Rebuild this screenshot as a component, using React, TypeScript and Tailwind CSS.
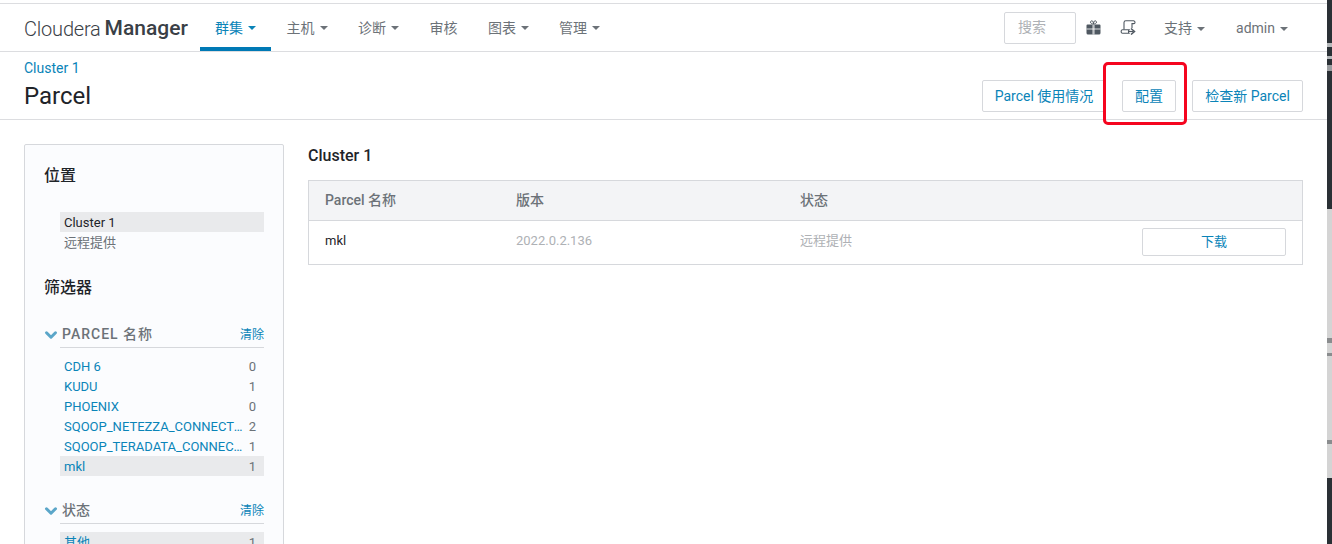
import { ChevronDown } from "lucide-react";

const FONT = "font-['Roboto','Noto_Sans_CJK_SC',sans-serif]";

const NAV = [
  { label: "群集", caret: true, active: true, w: "w-[71px]" },
  { label: "主机", caret: true, w: "w-[72px]" },
  { label: "诊断", caret: true, w: "w-[71px]" },
  { label: "审核", w: "w-[59px]" },
  { label: "图表", caret: true, w: "w-[71px]" },
  { label: "管理", caret: true, w: "w-[71px]" },
];

const PARCELS = [
  { name: "CDH 6", count: 0 },
  { name: "KUDU", count: 1 },
  { name: "PHOENIX", count: 0 },
  { name: "SQOOP_NETEZZA_CONNECTOR", count: 2 },
  { name: "SQOOP_TERADATA_CONNECTOR", count: 1 },
  { name: "mkl", count: 1, selected: true },
];

function Caret() {
  return <span className="ml-[5px] inline-block size-0 border-x-[4px] border-t-[4px] border-x-transparent border-t-current align-middle" />;
}

function OutlineButton({ children, className = "" }: { children: React.ReactNode; className?: string }) {
  return (
    <button type="button" className={`rounded-[2px] border border-[#d6d8dc] bg-white text-[#0a84b8] ${className}`}>
      {children}
    </button>
  );
}

function FilterHeading({ children }: { children: React.ReactNode }) {
  return (
    <div className="flex items-center">
      <ChevronDown className="size-[18px] shrink-0 -ml-[2px] mr-[2px] mt-[2px] text-[#5ba6c9]" strokeWidth={4} />
      <div className="flex h-[27px] flex-1 items-center justify-between pt-[2px]">
        {children}
      </div>
    </div>
  );
}

export default function App() {
  return (
    <div className={`${FONT} relative h-[544px] w-[1332px] overflow-hidden bg-white pt-[3px] text-[14px] text-[#1f2429]`}>
      <header className="flex h-[49px] items-stretch border-y border-[#dcdde0] pl-[24px] pr-[44px]">
        <div className="flex w-[176px] items-center pt-[2px] leading-none text-[#3a4046]">
          <span className="text-[20px] font-light tracking-[-0.2px]">Cloudera</span>
          <span className="ml-[4px] text-[21px] font-medium">Manager</span>
        </div>
        <nav className="flex">
          {NAV.map((item) => (
            <a
              key={item.label}
              className={`flex items-center justify-center border-b-[4px] pt-[5px] ${item.w} ${
                item.active ? "border-[#0079b5] text-[#0a84b8]" : "border-transparent text-[#6c7278]"
              }`}
            >
              {item.label}
              {item.caret && <Caret />}
            </a>
          ))}
        </nav>
        <div className="ml-auto flex items-center text-[#6c7278]">
          <div className="flex h-[32px] w-[72px] items-center rounded-[2px] border border-[#d6d8dc] pl-[13px] text-[14px] text-[#aeb1b5]">搜索</div>
          <svg viewBox="0 0 15 15" className="ml-[10px] size-[15px] text-[#4f5861]" fill="currentColor">
            <path d="M.5 5.500a1 1 0 0 1 1-1h12a1 1 0 0 1 1 1V13a1.500 1.500 0 0 1-1.500 1.500H2A1.500 1.500 0 0 1 .5 13z" />
            <path d="M7 4.500v10M8 4.500v10M.5 9h14" stroke="#fff" strokeWidth="0.8" />
            <path d="M7.500 4C6 4 4.500 3.500 4.500 2.200S6 .4 6.700 1.200 7.500 4 7.500 4zm0 0c1.500 0 3-.5 3-1.800S9 .4 8.300 1.200 7.500 4 7.500 4z" fill="none" stroke="currentColor" strokeWidth="1" />
          </svg>
          <svg viewBox="0 0 16 15" className="ml-[19px] h-[15px] w-[16px] text-[#4f5861]" fill="none" stroke="currentColor" strokeWidth="1.100">
            <path d="M4 9.500V2.500A1.800 1.800 0 0 1 5.800.8H13.500a1.500 1.500 0 0 1 1.500 1.600c0 .7-.5 1.200-1.200 1.200H12V8" />
            <path d="M2.500 9.800h6.500c-.7.800-.7 2.700 0 3.500H2.500c-1.800 0-1.800-3.500 0-3.500z" />
            <path d="M11 8.500l3.500 3-3.500 3" strokeWidth="1.500" />
            <path d="M8.500 11.500h5" strokeWidth="1.200" />
          </svg>
          <span className="ml-[28px] pt-[1px]">支持<Caret /></span>
          <span className="ml-[31px] pt-[1px]">admin<Caret /></span>
        </div>
      </header>

      <section className="flex h-[68px] items-start justify-between border-b border-[#dcdde0] pl-[24px] pr-[29px]">
        <div>
          <a className="mt-[8px] block text-[14px] leading-[16px] text-[#0a84b8]">Cluster 1</a>
          <h1 className="mt-[5px] text-[24px] leading-[30px] text-[#1f2429]">Parcel</h1>
        </div>
        <div className="mt-[28px] flex gap-[16px] text-[14px]">
          <OutlineButton className="h-[32px] w-[124px]">Parcel 使用情况</OutlineButton>
          <OutlineButton className="h-[32px] w-[54px]">配置</OutlineButton>
          <OutlineButton className="h-[32px] w-[111px]">检查新 Parcel</OutlineButton>
        </div>
      </section>

      <main className="flex gap-[24px] pl-[24px] pr-[29px] pt-[24px]">
        <aside className="h-[420px] w-[260px] shrink-0 rounded-[2px] border border-[#d6d8dc] bg-[#fbfcfe] pl-[19px] pr-[19px] pt-[19px]">
          <h3 className="text-[16px] font-medium leading-[24px]">位置</h3>
          <ul className="mt-[24px] ml-[16px] text-[13px] leading-[22px]">
            <li className="h-[20px] bg-[#e9eaec] pl-[4px]">Cluster 1</li>
            <li className="h-[20px] pl-[4px] text-[#6c7278]">远程提供</li>
          </ul>
          <h3 className="mt-[24px] text-[16px] font-medium leading-[24px]">筛选器</h3>

          <div className="mt-[20px]">
            <FilterHeading>
              <span className="text-[14px] font-medium tracking-[1px] text-[#6c7278]">PARCEL 名称</span>
              <a className="text-[12px] text-[#0a84b8]">清除</a>
            </FilterHeading>
            <ul className="ml-[16px] border-t border-[#d6d8dc] pt-[8px] text-[13px] leading-[22px] text-[#0a84b8]">
              {PARCELS.map((p) => (
                <li key={p.name} className={`flex h-[20px] justify-between pl-[4px] pr-[8px] ${p.selected ? "bg-[#e9eaec]" : ""}`}>
                  <span className="w-[180px] truncate">{p.name}</span>
                  <span className="text-[#6c7278]">{p.count}</span>
                </li>
              ))}
            </ul>
          </div>

          <div className="mt-[20px]">
            <FilterHeading>
              <span className="text-[14px] font-medium text-[#6c7278]">状态</span>
              <a className="text-[12px] text-[#0a84b8]">清除</a>
            </FilterHeading>
            <ul className="ml-[16px] border-t border-[#d6d8dc] pt-[8px] text-[13px] leading-[22px] text-[#0a84b8]">
              <li className="flex h-[20px] justify-between bg-[#e9eaec] pl-[4px] pr-[8px]">
                <span>其他</span>
                <span className="text-[#6c7278]">1</span>
              </li>
            </ul>
          </div>
        </aside>

        <div className="flex-1">
          <h2 className="text-[16px] font-medium leading-[24px]">Cluster 1</h2>
          <div className="mt-[12px] border border-[#d6d8dc]">
            <div className="flex h-[40px] items-center border-b border-[#d6d8dc] bg-[#f3f4f6] text-[14px] font-medium text-[#6c7278]">
              <span className="w-[207px] pl-[16px]">Parcel 名称</span>
              <span className="w-[284px]">版本</span>
              <span>状态</span>
            </div>
            <div className="flex h-[43px] items-start pt-[7px] text-[13px] leading-[26px]">
              <span className="w-[207px] pl-[16px]">mkl</span>
              <span className="w-[284px] text-[#aeb1b5]">2022.0.2.136</span>
              <span className="text-[#aeb1b5]">远程提供</span>
              <OutlineButton className="ml-auto mr-[16px] h-[28px] w-[144px] text-[13px] leading-[24px]">下载</OutlineButton>
            </div>
          </div>
        </div>
      </main>

      {/* red annotation drawn on top of the screenshot */}
      <div className="absolute left-[1103px] top-[62px] h-[63px] w-[84px] rounded-[5px] border-[3px] border-[#f5051f]" />
      {/* sliver of another window at the right edge */}
      <div className="absolute inset-y-0 right-0 flex w-[5px] flex-col bg-[#2a3035]">
        <div className="mt-[43px] h-[4px] bg-[#b5b8ba]" />
        <div className="mt-[9px] h-[3px] bg-[#b5b8ba]" />
        <div className="mt-[6px] h-[6px] bg-[#9a9da0]" />
        <div className="mt-[138px] flex h-[269px] flex-col bg-[#d4d4d4]">
          <div className="mt-[129px] h-[5px] bg-[#8a8c8e]" />
          <div className="mt-[10px] h-[3px] bg-[#8a8c8e]" />
          <div className="mt-[84px] h-[4px] bg-[#8a8c8e]" />
        </div>
      </div>
    </div>
  );
}
